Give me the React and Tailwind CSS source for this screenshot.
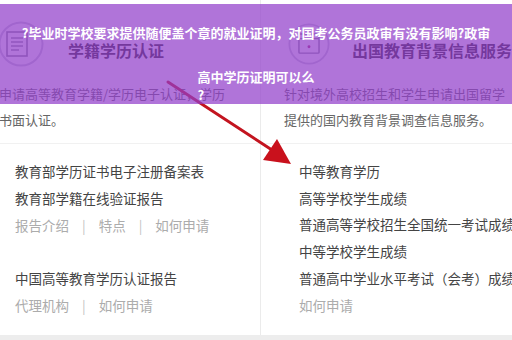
import React from "react";

/* ---------------- DATA ---------------- */

const leftRows = [
  { text: "教育部学历证书电子注册备案表" },
  { text: "教育部学籍在线验证报告" },
  { links: ["报告介绍", "特点", "如何申请"] },
  { empty: true },
  { text: "中国高等教育学历认证报告" },
  { links: ["代理机构", "如何申请"] },
];

const rightRows = [
  { text: "中等教育学历" },
  { text: "高等学校学生成绩" },
  { text: "普通高等学校招生全国统一考试成绩" },
  { text: "中等学校学生成绩" },
  { text: "普通高中学业水平考试（会考）成绩" },
  { links: ["如何申请"] },
];

/* ---------------- PIECES ---------------- */

function DocIcon() {
  return (
    <svg width="46" height="46" viewBox="0 0 46 46" fill="none">
      <circle cx="23" cy="23" r="21.5" stroke="#c9c9d6" strokeWidth="2" />
      <rect x="9" y="11" width="20" height="24" stroke="#8a8a9a" strokeWidth="1.6" />
      <line x1="13" y1="17" x2="25" y2="17" stroke="#8a8a9a" strokeWidth="1.4" />
      <line x1="13" y1="21" x2="25" y2="21" stroke="#8a8a9a" strokeWidth="1.4" />
      <line x1="13" y1="25" x2="25" y2="25" stroke="#8a8a9a" strokeWidth="1.4" />
      <line x1="13" y1="29" x2="21" y2="29" stroke="#8a8a9a" strokeWidth="1.4" />
    </svg>
  );
}

function BoxIcon() {
  return (
    <svg width="46" height="46" viewBox="0 0 46 46" fill="none">
      <circle cx="23" cy="23" r="21.5" stroke="#c9c9d6" strokeWidth="2" />
      <rect x="12" y="12" width="22" height="21" rx="1" stroke="#8a8a9a" strokeWidth="1.6" />
      <line x1="12" y1="17" x2="34" y2="17" stroke="#8a8a9a" strokeWidth="1.4" />
      <circle cx="23" cy="26" r="1.6" fill="#b0307a" />
    </svg>
  );
}

function Row({ row }) {
  if (row.empty) return <div className="h-[26.7px]" />;
  if (row.links) {
    return (
      <div className="flex items-center h-[26.7px] text-[13.5px] text-[#acacac] whitespace-nowrap">
        {row.links.map((l, i) => (
          <React.Fragment key={l}>
            {i > 0 && <span className="mx-[13px] text-[#c4c4c4]">|</span>}
            <span>{l}</span>
          </React.Fragment>
        ))}
      </div>
    );
  }
  return (
    <div className="h-[26.7px] leading-[26.7px] text-[13.5px] text-[#444] whitespace-nowrap">
      {row.text}
    </div>
  );
}

/* ---------------- PAGE ---------------- */

export default function App() {
  return (
    <div className="relative w-[512px] h-[340px] overflow-hidden bg-white font-['Noto_Sans_CJK_SC','Noto_Sans',sans-serif]">
      <div className="flex h-[335px]">
        {/* LEFT COLUMN */}
        <div className="w-[260px] shrink-0">
          <div className="h-[144px] border-b border-[#f1f1f1]">
            <div className="flex items-start pt-[21px] -ml-[2px]">
              <DocIcon />
              <div className="ml-[24px] mt-[18px] leading-[22px] text-[16px] font-bold text-[#2a2a2a] whitespace-nowrap">
                学籍学历认证
              </div>
            </div>
            <div className="mt-[14px] -ml-[1px] text-[13px] leading-[26px] text-[#666] whitespace-nowrap">
              <div>申请高等教育学籍/学历电子认证，学历</div>
              <div>书面认证。</div>
            </div>
          </div>
          <div className="pl-[15px] pt-[14px]">
            {leftRows.map((r, i) => (
              <Row key={i} row={r} />
            ))}
          </div>
        </div>

        <div className="w-px shrink-0 bg-[#ebebeb]" />

        {/* RIGHT COLUMN */}
        <div className="flex-1 min-w-0">
          <div className="h-[144px] border-b border-[#f1f1f1]">
            <div className="flex items-start pt-[21px] pl-[27px]">
              <BoxIcon />
              <div className="ml-[22px] mt-[18px] leading-[22px] text-[16px] font-bold text-[#2a2a2a] whitespace-nowrap">
                出国教育背景信息服务
              </div>
            </div>
            <div className="mt-[14px] pl-[23px] text-[13px] leading-[26px] text-[#666] whitespace-nowrap">
              <div>针对境外高校招生和学生申请出国留学</div>
              <div>提供的国内教育背景调查信息服务。</div>
            </div>
          </div>
          <div className="pl-[38px] pt-[14px]">
            {rightRows.map((r, i) => (
              <Row key={i} row={r} />
            ))}
          </div>
        </div>
      </div>
      <div className="h-[5px] bg-[#ededed]" />

      {/* RED ARROW */}
      <svg className="absolute inset-0 pointer-events-none" width="512" height="340" viewBox="0 0 512 340">
        <line x1="168" y1="82" x2="272" y2="150" stroke="#c3141f" strokeWidth="3" strokeLinecap="round" />
        <polygon points="291,164 263,160 277,139" fill="#c9111c" />
      </svg>

      {/* TITLE OVERLAY */}
      <div className="absolute left-0 top-[4px] w-full h-[100px] bg-[rgba(145,62,202,0.72)] text-white font-bold text-[13px]">
        <div className="pt-[19px] leading-[20px] text-center whitespace-nowrap">
          ?毕业时学校要求提供随便盖个章的就业证明，对国考公务员政审有没有影响?政审
        </div>
        <div className="flex justify-center mt-[25px]">
          <div className="leading-[18px] text-left whitespace-nowrap">
            <div>高中学历证明可以么</div>
            <div>?</div>
          </div>
        </div>
      </div>
    </div>
  );
}
